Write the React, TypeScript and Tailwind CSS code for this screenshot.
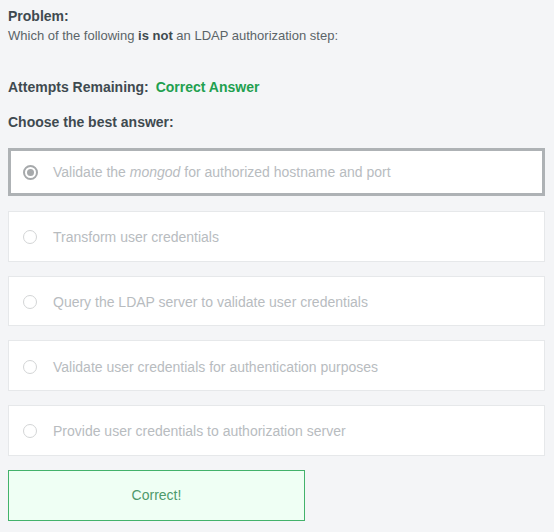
const options = [
  { id: 1, label: <>Validate the <em>mongod</em> for authorized hostname and port</>, selected: true },
  { id: 2, label: <>Transform user credentials</>, selected: false },
  { id: 3, label: <>Query the LDAP server to validate user credentials</>, selected: false },
  { id: 4, label: <>Validate user credentials for authentication purposes</>, selected: false },
  { id: 5, label: <>Provide user credentials to authorization server</>, selected: false },
];

function Radio({ checked }: { checked: boolean }) {
  return checked ? (
    <span className="w-[15px] h-[15px] rounded-full border-[2px] border-[#a6a9ab] flex items-center justify-center shrink-0">
      <span className="w-[7px] h-[7px] rounded-full bg-[#a6a9ab]" />
    </span>
  ) : (
    <span className="w-[14px] h-[14px] rounded-full border border-[#d3d5d6] shrink-0" />
  );
}

export default function App() {
  return (
    <div className="min-h-screen w-[554px] h-[532px] bg-[#f4f5f7] px-2 pt-[6px] text-[13px] text-[#3f4a50]" style={{ fontFamily: '"Liberation Sans", Arial, sans-serif' }}>
      <p className="font-bold text-[14px] leading-[20px]">Problem:</p>
      <p className="leading-[20px] text-[#5b6468]">
        Which of the following <b className="text-[#3f4a50]">is not</b> an LDAP authorization step:
      </p>

      <p className="mt-[31px] font-bold text-[14px] leading-[20px]">
        Attempts Remaining: <span className="ml-[3px] text-[#21a04f]">Correct Answer</span>
      </p>

      <p className="mt-[15px] font-bold text-[14px] leading-[20px]">Choose the best answer:</p>

      <div className="mt-[16px] flex flex-col gap-[14px] w-[537px] text-[14px]">
        {options.map(o => (
          <div
            key={o.id}
            className={
              o.selected
                ? 'h-[48px] mb-[1px] bg-white border-[3px] border-[#aeb2b5] flex items-center pl-[12px] gap-[15px] text-[#b8bcbf]'
                : 'h-[50.7px] bg-white border border-[#e6e8ea] flex items-center pl-[14px] gap-[16px] text-[#b8bcbf] pt-[2px]'
            }
          >
            <Radio checked={o.selected} />
            <span className="leading-[18px]">{o.label}</span>
          </div>
        ))}
      </div>

      <div className="mt-[14px] w-[297px] h-[51px] bg-[#effff4] border border-[#43b26b] flex items-center justify-center text-[14px] text-[#4e9a6b]">
        Correct!
      </div>
    </div>
  );
}
